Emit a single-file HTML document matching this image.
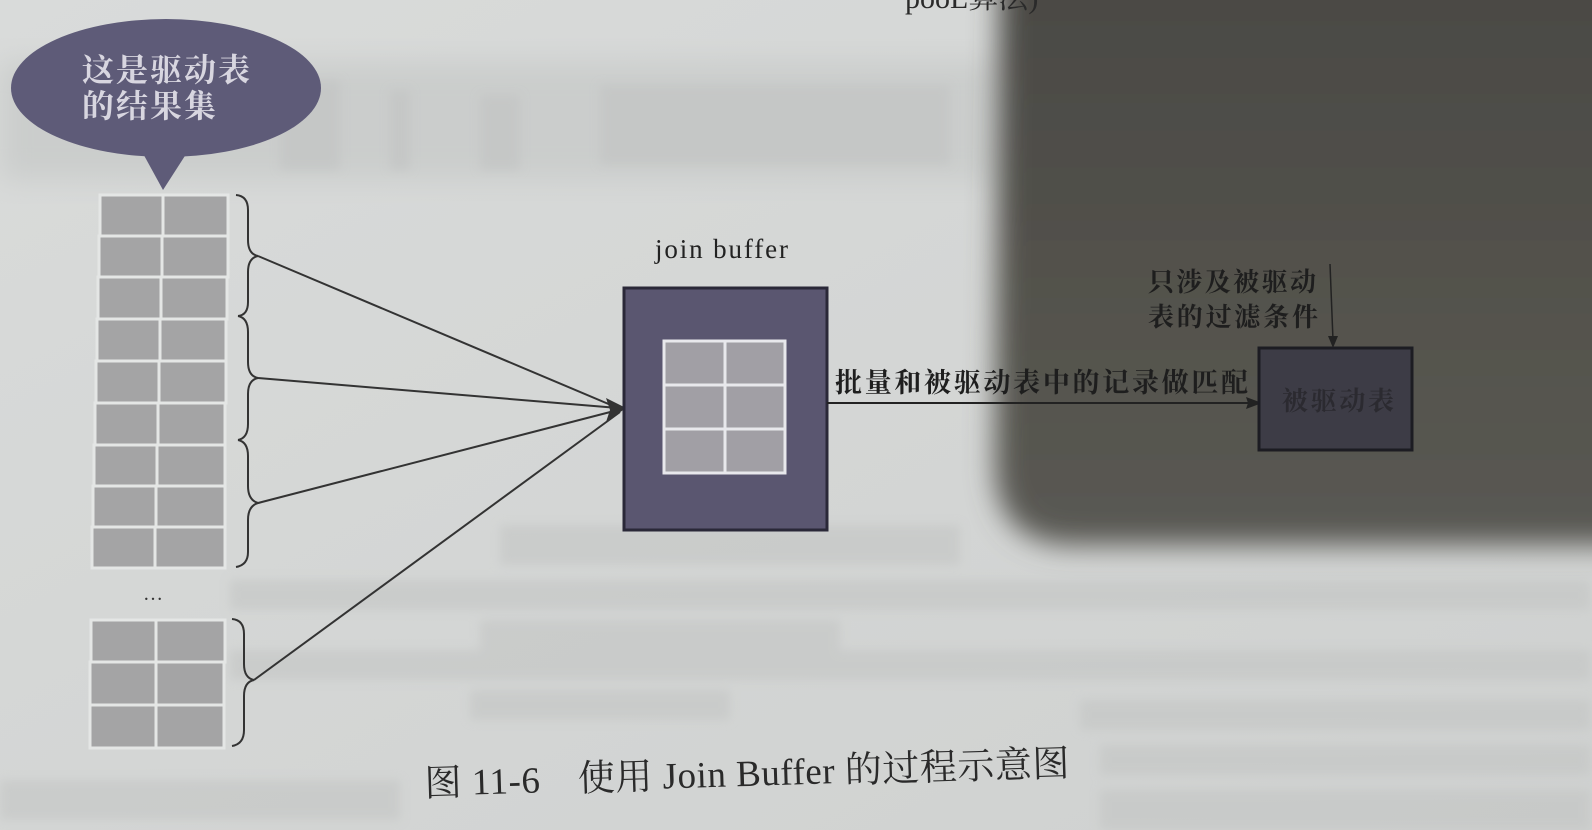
<!DOCTYPE html>
<html><head><meta charset="utf-8"><style>
html,body{margin:0;padding:0;width:1592px;height:830px;overflow:hidden;background:#d5d7d6}
svg{display:block}
.cjk{font-family:"Liberation Serif","Noto Serif CJK SC",serif}
</style></head><body>
<svg width="1592" height="830" viewBox="0 0 1592 830" xmlns="http://www.w3.org/2000/svg">
<defs>
<filter id="b12" x="-20%" y="-20%" width="140%" height="140%"><feGaussianBlur stdDeviation="14"/></filter>
<filter id="b4"><feGaussianBlur stdDeviation="5"/></filter>
<linearGradient id="bg" x1="0" y1="0" x2="1" y2="1"><stop offset="0" stop-color="#d9dbda"/><stop offset="1" stop-color="#cfd1d0"/></linearGradient>
<linearGradient id="sh" x1="0" y1="0" x2="0" y2="1"><stop offset="0" stop-color="#4a4944"/><stop offset="1" stop-color="#5a5953"/></linearGradient>
</defs>
<rect width="1592" height="830" fill="url(#bg)"/>
<rect x="0" y="62" width="1000" height="118" fill="#cbcdcc" filter="url(#b12)"/>
<g filter="url(#b4)" fill="#c3c5c4" opacity="0.7">
<rect x="280" y="80" width="60" height="90"/><rect x="390" y="90" width="20" height="80"/><rect x="480" y="95" width="40" height="75"/><rect x="600" y="85" width="350" height="80"/>
</g>
<g filter="url(#b4)" fill="#c2c4c3" opacity="0.55">
<rect x="500" y="525" width="460" height="40"/><rect x="230" y="580" width="1360" height="30"/><rect x="480" y="620" width="360" height="30"/><rect x="230" y="650" width="1360" height="30"/><rect x="470" y="690" width="260" height="30"/><rect x="1080" y="700" width="510" height="30"/><rect x="1100" y="745" width="490" height="30"/><rect x="0" y="780" width="400" height="40"/><rect x="1100" y="790" width="490" height="40"/>
</g>
<g filter="url(#b12)"><path d="M1000,-40 L1640,-40 L1640,545 L1075,545 Q995,545 995,465 Z" fill="url(#sh)"/></g>
<text x="905" y="8" font-family="Liberation Serif,Noto Serif CJK SC,serif" font-size="30" fill="#2a2a2a">pooL算法)</text>
<ellipse cx="166" cy="88" rx="155" ry="69" fill="#5e5b78"/>
<path d="M140,148 L163,190 L190,148 Z" fill="#5e5b78"/>
<text x="82" y="81" class="cjk" font-size="32" font-weight="bold" fill="#d8d6e0" textLength="168">这是驱动表</text>
<text x="82" y="117" class="cjk" font-size="32" font-weight="bold" fill="#d8d6e0" textLength="134">的结果集</text>
<g fill="#a4a4a5" stroke="#e4e6e5" stroke-width="3">
<rect x="100" y="195" width="63" height="41"/><rect x="163" y="195" width="65" height="41"/>
<rect x="99" y="236" width="63" height="41"/><rect x="162" y="236" width="66" height="41"/>
<rect x="98" y="277" width="63" height="42"/><rect x="161" y="277" width="66" height="42"/>
<rect x="97" y="319" width="63" height="42"/><rect x="160" y="319" width="66" height="42"/>
<rect x="96" y="361" width="63" height="42"/><rect x="159" y="361" width="67" height="42"/>
<rect x="95" y="403" width="63" height="42"/><rect x="158" y="403" width="67" height="42"/>
<rect x="94" y="445" width="63" height="41"/><rect x="157" y="445" width="68" height="41"/>
<rect x="93" y="486" width="63" height="41"/><rect x="156" y="486" width="69" height="41"/>
<rect x="92" y="527" width="63" height="41"/><rect x="155" y="527" width="70" height="41"/>
<rect x="91" y="620" width="65" height="42"/><rect x="156" y="620" width="69" height="42"/>
<rect x="90" y="662" width="66" height="43"/><rect x="156" y="662" width="68" height="43"/>
<rect x="90" y="705" width="66" height="43"/><rect x="156" y="705" width="68" height="43"/>
</g>
<text x="143" y="600" font-family="Liberation Serif,serif" font-size="20" fill="#333">…</text>
<g fill="none" stroke="#333" stroke-width="2">
<path d="M236,195 Q248,196 248,210 L248,240 Q248,254 258,256 Q248,258 248,272 L248,302 Q248,315 238,316"/>
<path d="M238,316 Q248,318 248,332 L248,362 Q248,376 258,378 Q248,380 248,394 L248,424 Q248,438 238,440"/>
<path d="M238,440 Q248,442 248,456 L248,486 Q248,500 258,503 Q248,506 248,520 L248,552 Q248,565 236,567"/>
<path d="M232,619 Q244,620 244,634 L244,664 Q244,678 254,680 Q244,682 244,696 L244,730 Q244,744 232,746"/>
</g>
<g stroke="#333" stroke-width="2">
<line x1="258" y1="256" x2="618" y2="408"/><line x1="258" y1="378" x2="618" y2="408"/>
<line x1="258" y1="503" x2="618" y2="410"/><line x1="254" y1="680" x2="620" y2="412"/>
</g>
<path d="M626,408 L606,398 L610,410 L606,422 Z" fill="#333"/>
<text x="655" y="258" font-family="Liberation Serif,serif" font-size="27" fill="#222" textLength="133">join buffer</text>
<rect x="624" y="288" width="203" height="242" fill="#5a5670" stroke="#2a2838" stroke-width="3"/>
<g fill="#a19fa5" stroke="#e8e8ec" stroke-width="3">
<rect x="664" y="341" width="61" height="44"/><rect x="725" y="341" width="60" height="44"/>
<rect x="664" y="385" width="61" height="44"/><rect x="725" y="385" width="60" height="44"/>
<rect x="664" y="429" width="61" height="44"/><rect x="725" y="429" width="60" height="44"/>
</g>
<line x1="827" y1="403" x2="1252" y2="403" stroke="#222" stroke-width="2"/>
<path d="M1262,403 L1246,397 L1248,403 L1246,409 Z" fill="#222"/>
<text x="835" y="392" class="cjk" font-size="27" font-weight="bold" fill="#1e1e1e" textLength="413">批量和被驱动表中的记录做匹配</text>
<rect x="1259" y="348" width="153" height="102" fill="#3d3c46" stroke="#1c1c22" stroke-width="3"/>
<text x="1282" y="410" class="cjk" font-size="26" font-weight="bold" fill="#2b2a30" textLength="112">被驱动表</text>
<text x="1148" y="291" class="cjk" font-size="26" font-weight="bold" fill="#1e1e1e" textLength="168">只涉及被驱动</text>
<text x="1148" y="326" class="cjk" font-size="26" font-weight="bold" fill="#1e1e1e" textLength="170">表的过滤条件</text>
<line x1="1330" y1="264" x2="1333" y2="340" stroke="#222" stroke-width="1.5"/>
<path d="M1333,348 L1328,336 L1338,336 Z" fill="#222"/>
<text x="425" y="796" transform="rotate(-1.8 425 796)" class="cjk" font-size="37" fill="#2a2a2a" textLength="645">图 11-6　使用 Join Buffer 的过程示意图</text>
</svg>
</body></html>
